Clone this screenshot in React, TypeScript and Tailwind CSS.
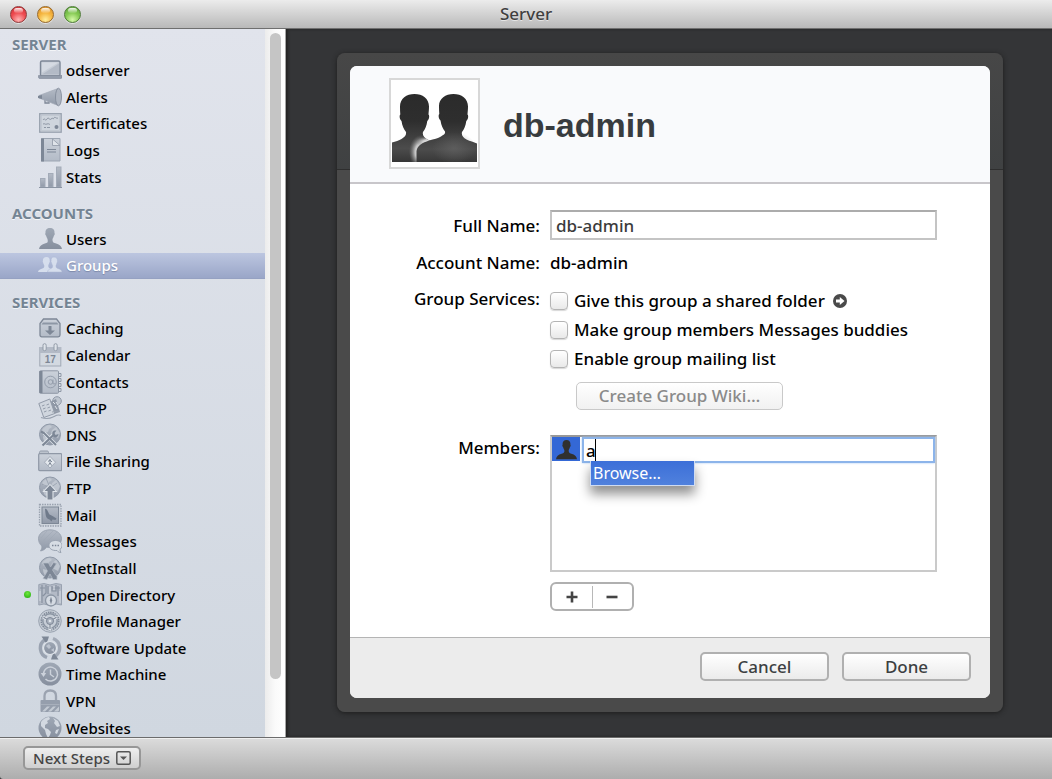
import React, { useState } from "react";

const LIGHT = "#dfe4ea";
const MID = "#a3abb8";
const DARK = "#7d8796";

function Defs() {
  return (
    <svg width="0" height="0" className="absolute" aria-hidden="true">
      <defs>
        <linearGradient id="steel" x1="0" y1="0" x2="0" y2="1">
          <stop offset="0" stopColor="#b4bbc6" />
          <stop offset="1" stopColor="#9099a8" />
        </linearGradient>
        <linearGradient id="steelDark" x1="0" y1="0" x2="0" y2="1">
          <stop offset="0" stopColor="#9fa8b5" />
          <stop offset="1" stopColor="#868f9e" />
        </linearGradient>
        <linearGradient id="paper" x1="0" y1="0" x2="0" y2="1">
          <stop offset="0" stopColor="#cbd1da" />
          <stop offset="1" stopColor="#b3bbc7" />
        </linearGradient>
        <linearGradient id="back" x1="0" y1="0" x2="0" y2="1">
          <stop offset="0" stopColor="#2b2b2b" />
          <stop offset="0.4" stopColor="#2e2e2e" />
          <stop offset="0.8" stopColor="#4c4c4c" />
          <stop offset="1" stopColor="#363636" />
        </linearGradient>
        <radialGradient id="chest" cx="0.5" cy="0.5" r="0.5">
          <stop offset="0" stopColor="#686868" />
          <stop offset="1" stopColor="#686868" stopOpacity="0" />
        </radialGradient>
        <radialGradient id="glow" cx="0.5" cy="0.5" r="0.5">
          <stop offset="0" stopColor="#ffffff" />
          <stop offset="0.5" stopColor="#e4e4e4" stopOpacity="0.8" />
          <stop offset="1" stopColor="#888888" stopOpacity="0" />
        </radialGradient>
      </defs>
    </svg>
  );
}

function Icon({ children }: { children: React.ReactNode }) {
  return (
    <svg viewBox="0 0 24 24" className="size-6 shrink-0" fill="none" aria-hidden="true">
      {children}
    </svg>
  );
}

function Globe() {
  return (
    <>
      <circle cx="12" cy="11.5" r="10.5" fill="url(#steel)" stroke="#8f99a8" strokeWidth="1" />
      <path d="M4 7c2-3 5-5 8-5l2 2-3 2-1 3-4 1zM14 7l4-3 4 6-2 5-4-2-3-3zM5 13l4 1 1 4-2 2c-2-1-3-4-3-7z" fill="#c6ccd5" opacity="0.8" />
    </>
  );
}

const icons: Record<string, React.ReactNode> = {
  odserver: (
    <>
      <rect x="2.500" y="3" width="19.500" height="15" rx="1.500" fill="#c6ccd6" stroke={DARK} strokeWidth="1.400" />
      <path d="M4 4.500h16.500L4 14.500z" fill="#d5dae2" />
      <path d="M4 16.500L21 5.500v11z" fill="#b3bac6" />
      <path d="M.5 17.500h23.500V19c0 1-.5 1.500-1.500 1.500H2c-1 0-1.500-.5-1.500-1.500z" fill="#939cab" stroke={DARK} strokeWidth=".6" />
    </>
  ),
  Alerts: (
    <>
      <path d="M7 14v4h4v-3" stroke={DARK} strokeWidth="1.300" />
      <path d="M1 10.500L20 3.500v17L1 13z" fill="url(#steel)" stroke={MID} strokeWidth=".7" />
      <ellipse cx="20.500" cy="12" rx="3" ry="8.800" fill="#adb4c0" stroke={DARK} strokeWidth=".8" />
      <path d="M0 11l4-1v4l-4-1z" fill={DARK} />
    </>
  ),
  Certificates: (
    <>
      <rect x="1.700" y="2.700" width="21.500" height="18.500" fill="#cfd5dd" stroke="#98a1ae" strokeWidth="1.300" />
      <rect x="3.500" y="4.500" width="18" height="15" stroke="#bac1cc" strokeWidth=".6" />
      <path d="M5 9c2-3 2 2 4-1s2 2 4 0 2 1 3-1 2 1 4 0M5 13c2-1 2 1 4 0s2 1 3 0M6 16.500h2m1 0h3" stroke={DARK} strokeWidth=".8" />
      <circle cx="18.500" cy="16" r="2" fill={DARK} />
    </>
  ),
  Logs: (
    <>
      <path d="M3.500 .5h18.500v22.500H3.500z" fill="url(#paper)" stroke="#9ca5b2" strokeWidth="1" />
      <path d="M3 .5h3v23H3z" fill={DARK} />
      <path d="M14.500 1v6.500H22z" fill={LIGHT} stroke="#9099a7" strokeWidth=".8" />
      <path d="M9 11.500h9M9 14h9" stroke={DARK} strokeWidth="1" />
    </>
  ),
  Stats: (
    <>
      <rect x="2.500" y="13.500" width="4.500" height="8.500" fill="url(#steel)" stroke={MID} />
      <rect x="10.500" y="8.500" width="4.500" height="13.500" fill="url(#steel)" stroke={MID} />
      <rect x="18.500" y="2" width="4.500" height="20" fill="url(#steel)" stroke={MID} />
      <path d="M1 22.500h23" stroke="#8b95a3" strokeWidth="1" />
    </>
  ),
  Users: (
    <path
      d="M12 1c3 0 4.800 1.800 4.500 5 .5.500.3 2-.5 2.500-.4 1.500-1 2.500-1.500 3.500 0 3 .5 3.500 3 4.300 4 1.200 6 2.700 6.500 5.700H1c.5-3 2.500-4.500 6.500-5.700 2.500-.8 2.500-1.300 2-4.300C9 11 8.500 10 8 8.500 7.200 8 7 6.500 7.500 6 7.200 2.800 9 1 12 1z"
      fill="url(#steelDark)"
    />
  ),
  Groups: (
    <g fill="#d6deed">
      <path d="M8.500 4c2.300 0 3.500 1.400 3.200 3.800.3.500.1 1.500-.4 2-.4 1.400-.9 2-1 2.700 0 2 .5 2.400 2 3 2.600.9 3.400 1.700 3.700 3.500H0c.3-1.800 1.500-2.600 4.300-3.500 1.800-.6 2-1 2-3-.3-.7-.8-1.300-1.100-2.700-.5-.5-.6-1.500-.3-2C4.600 5.400 6.200 4 8.500 4z" />
      <path d="M16 4c2.300 0 3.700 1.400 3.400 3.800.3.500.1 1.500-.4 2-.3 1.400-.7 2-1 2.700 0 2 .2 2.400 2 3 2.800.9 3.700 1.700 4 3.500H9.500c.3-1.800 1-2.600 3.400-3.500 1.500-.6 1.700-1 1.700-3-.4-.7-.8-1.300-1.100-2.700-.5-.5-.7-1.500-.4-2C12.800 5.400 13.700 4 16 4z" stroke="#a9b5d2" strokeWidth=".5" />
    </g>
  ),
  Caching: (
    <>
      <path d="M5.500 3h13l3.500 4.500V19c0 1.200-.6 1.800-1.800 1.800H3.800C2.600 20.800 2 20.200 2 19V7.500z" fill="url(#paper)" stroke={DARK} strokeWidth="1.300" />
      <path d="M5 6.500h14l1.500 2h-17z" fill="#8d97a5" />
      <path d="M10.500 10h3v4.500H17L12 19l-5-4.500h3.500z" fill={DARK} />
    </>
  ),
  Calendar: (
    <>
      <rect x="1.800" y="4.500" width="21" height="18.500" fill="#d3d9e1" stroke="#a0a8b5" />
      <path d="M1.500 4h21.500v6H1.500z" fill="#b3bac6" />
      <rect x="5" y=".7" width="3.200" height="7" rx="1.500" fill={LIGHT} stroke="#8b95a3" strokeWidth=".9" />
      <rect x="16" y=".7" width="3.200" height="7" rx="1.500" fill={LIGHT} stroke="#8b95a3" strokeWidth=".9" />
      <text x="12.300" y="20" textAnchor="middle" fontSize="10" fontWeight="700" fill={DARK} fontFamily="Liberation Sans, sans-serif">
        17
      </text>
    </>
  ),
  Contacts: (
    <>
      <path d="M20 3.500h3v3h-3m0 2h3v3h-3m0 2h3v3h-3m0 2h3v3h-3" stroke="#8f98a6" strokeWidth="1" />
      <rect x="1.500" y=".8" width="19" height="22.500" rx="1" fill="url(#paper)" stroke="#8f98a6" />
      <path d="M1.500 1h3v22h-3z" fill={DARK} />
      <circle cx="12.500" cy="12" r="5.800" stroke="#949dab" strokeWidth="1" />
      <circle cx="12.500" cy="12" r="2.300" stroke="#949dab" strokeWidth="1" />
      <path d="M15 9.500v3.500c0 1.500 2 1.500 2.300 0" stroke="#949dab" />
    </>
  ),
  DHCP: (
    <>
      <circle cx="19" cy="5" r="4.300" fill="#bfc6d0" stroke="#8f98a6" />
      <path d="M12 6l6-3 4 13-6 2z" fill="#8f98a6" />
      <path d="M.8 7.500l11-4.500 5 14.500-11 4z" fill="#d0d6de" stroke="#929ba9" />
      <path d="M4 10l2.500-1m2 0l2.500-1M5 13l2.500-1m2 0l2.500-1M6 16l2.500-1m2 0l2.500-1" stroke="#929ba9" strokeWidth="1" />
      <path d="M15 6l2 2m1-2l2 3m-3 1l2 3" stroke={LIGHT} strokeWidth="1" />
      <path d="M3 21.500c6 2 9 1 12-.5s5-3 8-1.500M14 16l7-1" stroke="#98a1ae" strokeWidth="1.200" />
    </>
  ),
  DNS: (
    <>
      <Globe />
      <path d="M6 10l12 12" stroke={LIGHT} strokeWidth="3.600" />
      <path d="M16 11L4.500 22" stroke={LIGHT} strokeWidth="3.600" />
      <path d="M3 8.500l3 1.500 12 12" stroke={DARK} strokeWidth="2" />
      <path d="M4.500 22.500L16 11.500" stroke={DARK} strokeWidth="2.200" />
      <path d="M14.500 12c-1-3 1-5 4-4.500l-2 2.500 1 2 3-1c0 3-3 4-5 3z" fill={DARK} />
    </>
  ),
  "File Sharing": (
    <>
      <path d="M1.500 5V3.500C1.500 2.500 2 2 3 2h6c1 0 1.500.500 1.500 1.500V5z" fill="#bcc3cd" stroke="#929ba9" />
      <rect x=".7" y="4.700" width="23" height="17" rx="1" fill="url(#paper)" stroke="#8f98a6" strokeWidth="1.200" />
      <path d="M12 7.500l5.500 5.700L12 19l-5.500-5.800z" fill="#e3e8ed" stroke="#929ba9" strokeWidth=".7" />
      <path d="M12 10v3m-2-.5l2-1.500 2 2m-3.500 3.500l1.500-3 1.500 3" stroke={DARK} strokeWidth="1" />
    </>
  ),
  FTP: (
    <>
      <Globe />
      <path d="M4 8l8 4 7-5M8 2l4 10" stroke="#8f99a8" strokeWidth=".7" />
      <path d="M12 8.500l6.500 7h-3.500V24H9v-8.500H5.500z" fill={DARK} stroke={LIGHT} strokeWidth="1.100" />
    </>
  ),
  Mail: (
    <>
      <rect x="1.500" y="1.500" width="21.500" height="21.500" fill="#cfd5dd" stroke="#9aa3b0" strokeWidth="1.300" strokeDasharray="1.500 1" />
      <rect x="4" y="4" width="16.500" height="16.500" fill="url(#steel)" stroke={DARK} />
      <path d="M7 5.500c3 1 3 4 4.500 6l3 1.500 4 2.500-1 1.500-3-.5-1 2-2-2c-4-1-4-5-4.500-11z" fill="#6f7a8a" />
    </>
  ),
  Messages: (
    <>
      <path d="M12 .8c6.800 0 11.500 4 11.500 9S18.800 18.500 12 18.500l-3.500-.3C7 20.500 5 21.500 2.500 22c1-1.500 1.500-3 1.300-5C1.500 15 .5 12.500.5 9.800c0-5 4.700-9 11.500-9z" fill="url(#steel)" stroke="#949dab" strokeWidth=".8" />
      <path d="M3 9l6-7m-5 11L15 2M7 15L19 3" stroke="#a0a8b5" strokeWidth=".6" />
      <path d="M17.500 11.500c4 0 6.500 2 6.500 5 0 1.800-.8 3-2 3.900 0 1.300.3 2 1 3.100-1.700 0-3-.7-4-2-5 .3-8-2-8-5s2.500-5 6.500-5z" fill="#d7dde4" stroke="#99a2b0" />
      <path d="M14 16.500h1.500m1.300 0h1.500m1.200 0H21" stroke={DARK} strokeWidth="1.500" />
    </>
  ),
  NetInstall: (
    <>
      <Globe />
      <path d="M5 7h5.500l2 4 3-4.500 3 1L14.500 14l3.500 5.500h1V23.500h-4L12 18l-3 5.500-4-1L9.500 15 6.500 10z" fill={DARK} stroke="#b6bdc8" strokeWidth=".7" />
    </>
  ),
  "Open Directory": (
    <>
      <path d="M.8 1.500L6 .5l6 1.500 6-1.500 5.500 1V22l-5.500-1-6 1.500-6-1.500-5.200 1z" fill="#b3bac6" stroke="#99a2b0" />
      <path d="M4 2v18M8 2v8l-3 3M10 3v8M14 3v5h4V2m2 1v10M2 5h5m7 0h8" stroke="#8791a0" strokeWidth="1.200" />
      <path d="M2 8v10m10-14v6m4-7v4m6 1v12" stroke="#d6dbe3" strokeWidth="1" />
      <circle cx="13" cy="17.500" r="5.500" fill="#d4dae2" stroke="#8b95a3" strokeWidth="1.300" />
      <path d="M13 13.500l1.200 4-1.200 4-1.200-4z" fill={DARK} />
    </>
  ),
  "Profile Manager": (
    <>
      <circle cx="12" cy="12" r="11.300" fill="#c6cdd6" stroke="#9aa3b0" />
      <circle cx="12" cy="12" r="8.800" stroke={DARK} strokeWidth="1.400" strokeDasharray="1.500 .8" />
      <circle cx="12" cy="12" r="7.200" stroke="#8b95a3" strokeWidth="1.500" />
      <path d="M12 12L5 8m7 4l7-4m-7 4v9" stroke="#e0e5eb" strokeWidth="2.800" />
      <path d="M12 12L5.500 8.300M12 12l6.500-3.700M12 12v8" stroke={DARK} strokeWidth="1.200" />
      <circle cx="12" cy="12" r="3.500" fill="#aab2be" stroke={DARK} />
      <circle cx="12" cy="12" r="1.300" fill={LIGHT} />
    </>
  ),
  "Software Update": (
    <>
      <path d="M9 21.500A10 10 0 0 1 6.500 4" stroke="#99a2b0" strokeWidth="3.400" />
      <path d="M3.500 .5h7.500L8.500 8z" fill={DARK} />
      <path d="M15 2.500A10 10 0 0 1 17.500 20" stroke="#a1a9b6" strokeWidth="3.400" />
      <path d="M20.500 23.500H13l2.500-7.500z" fill={DARK} />
      <circle cx="12" cy="12" r="6.500" fill="url(#steelDark)" stroke="#dfe4ea" strokeWidth="1.200" />
      <path d="M8 10l3-2 2 3-2 2zM13 14l3-2v4z" fill="#bdc4cf" />
    </>
  ),
  "Time Machine": (
    <>
      <circle cx="12" cy="12" r="11.500" fill="url(#steelDark)" />
      <path d="M5.500 12a7 7 0 1 1 2 5" stroke="#ccd2db" strokeWidth="1.500" />
      <path d="M2.700 11h5.500l-2.700 4z" fill="#ccd2db" />
      <path d="M12.500 7.500V12.500l3.500 2.500" stroke="#ccd2db" strokeWidth="1.400" />
    </>
  ),
  VPN: (
    <>
      <path d="M6.500 12V7c0-3.500 2-5.500 5.700-5.500S18 3.500 18 7v5" stroke="#9ba3b0" strokeWidth="2.300" />
      <rect x="2.500" y="11" width="19.500" height="12" rx="1" fill="#959eac" />
      <path d="M4 22.500l5-5h3l-5 5zm6 0l5-5h3l-5 5zm6 0l5-5v4l-1 1z" fill="#c3cad3" />
      <path d="M3 15.500h18.500" stroke="#a7afbb" />
    </>
  ),
  Websites: (
    <>
      <circle cx="12" cy="12" r="11.500" fill="url(#steelDark)" />
      <path d="M3 6c2-3 5-4.700 8-5l1 2-3 2 1 2-3 2 0 3 3 1 3 3-1 3-2 3-2-4-1-4-4-4zM15 2l5 3 2 5-3 1-3-4 1-2zM18 14l3-1-2 5-2-1z" fill="#d3d9e1" />
    </>
  ),
};

const sections = [
  {
    title: "SERVER",
    head: "pt-[3px]",
    list: "h-[133px]",
    items: ["odserver", "Alerts", "Certificates", "Logs", "Stats"],
  },
  { title: "ACCOUNTS", head: "pt-[11px]", list: "h-[53px]", items: ["Users", "Groups"] },
  {
    title: "SERVICES",
    head: "pt-[11px]",
    list: "h-[426px]",
    items: [
      "Caching",
      "Calendar",
      "Contacts",
      "DHCP",
      "DNS",
      "File Sharing",
      "FTP",
      "Mail",
      "Messages",
      "NetInstall",
      "Open Directory",
      "Profile Manager",
      "Software Update",
      "Time Machine",
      "VPN",
      "Websites",
    ],
  },
];

function Sidebar() {
  const [selected, setSelected] = useState("Groups");
  return (
    <aside className="flex w-[286px] shrink-0 overflow-hidden">
      <nav className="min-w-0 flex-1 overflow-hidden bg-linear-to-b from-[#e1e4ec] to-[#d0d7e0]">
        {sections.map((s) => (
          <section key={s.title}>
            <h2
              className={`${s.head} pb-px pl-3 text-[15px] leading-6 font-bold text-[#748493] [text-shadow:0_1px_0_#f3f5f8]`}
            >
              {s.title}
            </h2>
            <ul className={`grid auto-rows-fr ${s.list}`}>
              {s.items.map((name) => (
                <li key={name} className="min-h-0">
                  <button
                    type="button"
                    onClick={() => setSelected(name)}
                    className={`flex h-full w-full items-center gap-1 pl-[38px] text-left text-[15px] leading-4 font-medium ${
                      name === selected
                        ? "border-b border-[#95a1c2] bg-linear-to-b from-[#bcc6e0] to-[#9aa6c8] text-white [text-shadow:0_1px_1px_#7c88a8]"
                        : "text-black"
                    }`}
                  >
                    {name === "Open Directory" && (
                      <span className="-ml-[14px] mr-[3px] size-[7px] rounded-full bg-[radial-gradient(circle_at_50%_35%,#6fe83c,#1fa80c)]" />
                    )}
                    <Icon>{icons[name]}</Icon>
                    <span>{name}</span>
                  </button>
                </li>
              ))}
            </ul>
          </section>
        ))}
      </nav>
      <div className="flex w-[21px] shrink-0 justify-center border-r border-[#a5a5a5] bg-linear-to-r from-[#ececec] via-[#fafafa] to-white pt-1">
        <div className="h-[646px] w-[11px] rounded-full bg-[#c5c5c5]" />
      </div>
    </aside>
  );
}

const HEAD =
  "M23 0C31 0 37.500 4.500 37.500 12.500c0 3-.3 5.500-.5 8 1.200 1 .8 5-1.200 6.500-.8 5-2 8-4.300 11-.8 3.500 1 5.500 4.500 7.500C42 48.500 46 49.500 49 52V68H-10V52C-4 49 5 48 10 45c3.500-2 5-4 4.500-7-2.300-3-3.700-6-4.500-11-2-1.500-2.400-5.500-1.200-6.500-.2-2.500-.3-5-.3-8C8.500 4.500 15 0 23 0z";

function GroupPicture() {
  return (
    <svg viewBox="0 0 85 85" className="size-[85px]" role="img" aria-label="Group picture">
      <defs>
        <clipPath id="frame">
          <rect x="0" y="0" width="85" height="81" />
        </clipPath>
        <clipPath id="left">
          <path d={HEAD} transform="translate(-.5 13)" />
        </clipPath>
      </defs>
      <g clipPath="url(#frame)">
        <path d={HEAD} transform="translate(-.5 13)" fill="url(#back)" />
        <g clipPath="url(#left)">
          <ellipse cx="29" cy="71" rx="12" ry="17" fill="url(#glow)" />
          <ellipse cx="38" cy="61" rx="14" ry="6" fill="url(#glow)" />
        </g>
        <path
          d="M61.500 13c8 0 14.500 4.500 14.500 12.500 0 3-.3 5.500-.5 8 1.200 1 .8 5-1.200 6.500-.8 5-2 8-4.300 11-.8 3.500 1 5.500 4.500 7.500 4 2 8 2.500 11.500 4.500v19H24.500V70c1-6 6-8 12.500-10.500 5-1.500 9-2 12-4 3-1.800 4.500-2.500 4-5-2.300-3-3.700-6-4.500-11-2-1.500-2.400-5.500-1.200-6.500-.2-2.500-.3-5-.3-8C47 17.500 53.500 13 61.500 13z"
          fill="url(#back)"
        />
        <ellipse cx="62" cy="67" rx="22" ry="16" fill="url(#chest)" opacity=".6" />
      </g>
    </svg>
  );
}

function Check({ label, children }: { label: string; children?: React.ReactNode }) {
  return (
    <div className="flex h-[29px] items-center gap-2">
      <label className="flex items-center gap-[6px]">
        <input
          type="checkbox"
          className="size-[18px] appearance-none rounded-[4px] border border-[#b4b4b4] bg-linear-to-b from-white to-[#e9e9e9] shadow-[0_1px_1px_#d8d8d8] checked:bg-none checked:bg-[#4a7ddb]"
        />
        {label}
      </label>
      {children}
    </div>
  );
}

const pushButton =
  "h-[29px] w-[129px] rounded-[5px] border-2 border-[#b0b0b0] bg-linear-to-b from-white to-[#ebebeb] text-[17px] leading-6 font-medium text-[#3c3f42]";

function Dialog() {
  const [fullName, setFullName] = useState("db-admin");
  const [member, setMember] = useState("a");
  return (
    <div className="flex min-h-[659px] flex-1 flex-col rounded-[8px] bg-[linear-gradient(#474747,#3f4142_116px,#2e2e2e_116px,#2e2e2e_117px,#4a4a4a_117px)] p-[13px] pb-[14px] shadow-[0_1px_5px_#1c1c1c]">
      <form
        className="flex flex-1 flex-col overflow-hidden rounded-[7px] bg-white text-[17px] leading-6 font-medium"
        onSubmit={(e) => e.preventDefault()}
      >
        <header className="flex h-[118px] items-center gap-[23px] border-b-2 border-[#c8c6ca] bg-[#f9fafc] pb-[2px] pl-[39px]">
          <div className="flex size-[91px] items-center justify-center border-2 border-[#d8d8d8] bg-white">
            <GroupPicture />
          </div>
          <h1 className="pt-1 font-['Liberation_Sans',Arial,sans-serif] text-[34px] leading-10 font-bold text-[#383c3f]">
            db-admin
          </h1>
        </header>

        <div className="grid flex-1 grid-cols-[190px_1fr] content-start gap-x-[10px] pt-[26px] pr-[53px]">
          <label htmlFor="full-name" className="pt-1 text-right">
            Full Name:
          </label>
          <input
            id="full-name"
            value={fullName}
            onChange={(e) => setFullName(e.target.value)}
            className="h-[30px] min-w-0 border-2 border-[#c4c4c4] border-t-[#acacac] px-1 text-[#3c3c3c] outline-none"
          />

          <span className="mt-[11px] text-right">Account Name:</span>
          <span className="mt-[11px]">db-admin</span>

          <span className="mt-3 text-right">Group Services:</span>
          <div className="mt-[11px] flex flex-col">
            <Check label="Give this group a shared folder">
              <button type="button" aria-label="Open shared folder" className="size-[14px]">
                <svg viewBox="0 0 14 14" className="size-[14px]">
                  <circle cx="7" cy="7" r="7" fill="#4a4a4a" />
                  <path d="M3 5.500h3.800V3L11.500 7l-4.700 4V8.500H3z" fill="#fff" />
                </svg>
              </button>
            </Check>
            <Check label="Make group members Messages buddies" />
            <Check label="Enable group mailing list" />
            <button
              type="button"
              disabled
              className="mt-[9px] ml-[26px] h-[28px] w-[207px] rounded-[5px] border border-[#c9c9c9] bg-linear-to-b from-white to-[#f1f1f1] text-[#8a8a8a]"
            >
              Create Group Wiki…
            </button>
          </div>

          <label htmlFor="member" className="mt-[26px] text-right">
            Members:
          </label>
          <div className="mt-[25px]">
            <div className="h-[137px] border-2 border-[#cacaca] border-t-[#989898]">
              <div className="flex h-[26px] gap-[2px]">
                <div className="flex h-6 w-7 items-end justify-center bg-[#3468d6] pb-px">
                  <svg viewBox="0 0 24 24" className="size-[21px]" aria-hidden="true">
                    <path
                      d="M12 1c3 0 4.800 2 4.500 5.500.5.500.3 2-.5 2.500-.4 1.500-1 2.500-1.500 3.500 0 3 .5 3.500 3 4.300 4 1.200 6 2.700 6.500 6.200H0c.5-3.500 2.500-5 6.500-6.200 2.500-.8 3.500-1.300 3-4.300C9 11.500 8.500 10.500 8 9 7.200 8.500 7 7 7.500 6.500 7.200 3 9 1 12 1z"
                      fill="#303030"
                    />
                  </svg>
                </div>
                <div className="relative min-w-0 flex-1">
                  <input
                    id="member"
                    value={member}
                    onChange={(e) => setMember(e.target.value)}
                    className="h-[26px] w-full border-2 border-[#8cb4ea] pl-[2px] shadow-[0_0_2px_#a9c9f3] outline-none"
                  />
                  <span className="absolute top-[2px] left-[13px] h-[22px] w-px bg-black" />
                  <button
                    type="button"
                    className="absolute top-6 left-2 h-[25px] w-[105px] border border-t-0 border-[#cfdcf2] bg-linear-to-b from-[#3c6fd8] to-[#5081dd] px-[2px] text-left text-[16px] leading-6 font-normal text-white shadow-[0_8px_12px_#00000070]"
                  >
                    Browse…
                  </button>
                </div>
              </div>
            </div>
            <div className="mt-[10px] flex h-[29px] w-[84px] items-center rounded-[6px] border-2 border-[#b0b0b0] bg-white">
              <button type="button" aria-label="Add member" className="flex h-full flex-1 items-center justify-center">
                <svg viewBox="0 0 12 12" className="size-3">
                  <path d="M6 .5v11M.5 6h11" stroke="#444" strokeWidth="2.600" />
                </svg>
              </button>
              <span className="h-[22px] w-px bg-[#b8b8b8]" />
              <button type="button" aria-label="Remove member" className="flex h-full flex-1 items-center justify-center">
                <svg viewBox="0 0 12 12" className="size-3">
                  <path d="M.5 6h11" stroke="#444" strokeWidth="2.600" />
                </svg>
              </button>
            </div>
          </div>
        </div>

        <footer className="flex h-[61px] items-center justify-end gap-[13px] border-t border-[#b4b4b4] bg-[#ececec] pr-[19px] pb-[3px]">
          <button type="button" className={pushButton}>
            Cancel
          </button>
          <button type="submit" className={pushButton}>
            Done
          </button>
        </footer>
      </form>
    </div>
  );
}

const lights = [
  { label: "Close", tone: "border-[#8f3a3a] bg-[radial-gradient(circle_at_50%_85%,#ffb5b5,#ee4b50_50%,#cf2f36)]" },
  { label: "Minimize", tone: "border-[#96682c] bg-[radial-gradient(circle_at_50%_85%,#ffee9c,#f5b33c_50%,#d98d2a)]" },
  { label: "Zoom", tone: "border-[#4f7b38] bg-[radial-gradient(circle_at_50%_85%,#d6f9a8,#82c850_50%,#5c9f3c)]" },
];

export default function App() {
  return (
    <div className="flex h-screen flex-col overflow-hidden bg-[#343537] font-['Noto_Sans','Open_Sans',sans-serif]">
      <Defs />
      <header className="grid h-[29px] shrink-0 grid-cols-[1fr_auto_1fr] items-center border-b border-[#6f6f6f] bg-linear-to-b from-[#ececec] to-[#b9b9b9]">
        <div className="flex gap-[10px] pl-[10px]">
          {lights.map((l) => (
            <button
              key={l.label}
              type="button"
              aria-label={l.label}
              className={`relative size-[17px] rounded-full border ${l.tone} shadow-[0_1px_0_#ffffff90]`}
            >
              <span className="absolute top-px left-[3px] h-[5px] w-[9px] rounded-full bg-linear-to-b from-white/90 to-white/10" />
            </button>
          ))}
        </div>
        <div className="text-[17px] leading-6 font-medium text-[#3f3f3f] [text-shadow:0_1px_0_#ffffff90]">Server</div>
      </header>

      <div className="flex min-h-0 flex-1">
        <Sidebar />
        <main className="flex min-w-0 flex-1 items-start overflow-hidden bg-[#343537] pt-6 pr-[49px] pl-[51px] shadow-[inset_2px_0_3px_#222]">
          <Dialog />
        </main>
      </div>

      <footer className="flex h-[42px] shrink-0 items-center rounded-bl-[3px] border-t border-[#6c6c6c] bg-linear-to-b from-[#dcdcdc] to-[#adadad] pb-[2px] pl-[23px] shadow-[inset_0_1px_0_#f0f0f0]">
        <button
          type="button"
          className="flex h-[24px] w-[118px] items-center justify-center gap-[6px] rounded-[5px] border-2 border-[#979797] bg-linear-to-b from-[#efefef] to-[#cfcfcf] text-[15px] leading-5 font-medium text-[#444]"
        >
          Next Steps
          <svg viewBox="0 0 15 14" className="h-[14px] w-[15px]" fill="none" aria-hidden="true">
            <rect x=".8" y=".8" width="13.400" height="12.400" rx="1.500" stroke="#555" strokeWidth="1.500" />
            <path d="M4 5.500h7L7.500 9z" fill="#555" />
          </svg>
        </button>
      </footer>
    </div>
  );
}
